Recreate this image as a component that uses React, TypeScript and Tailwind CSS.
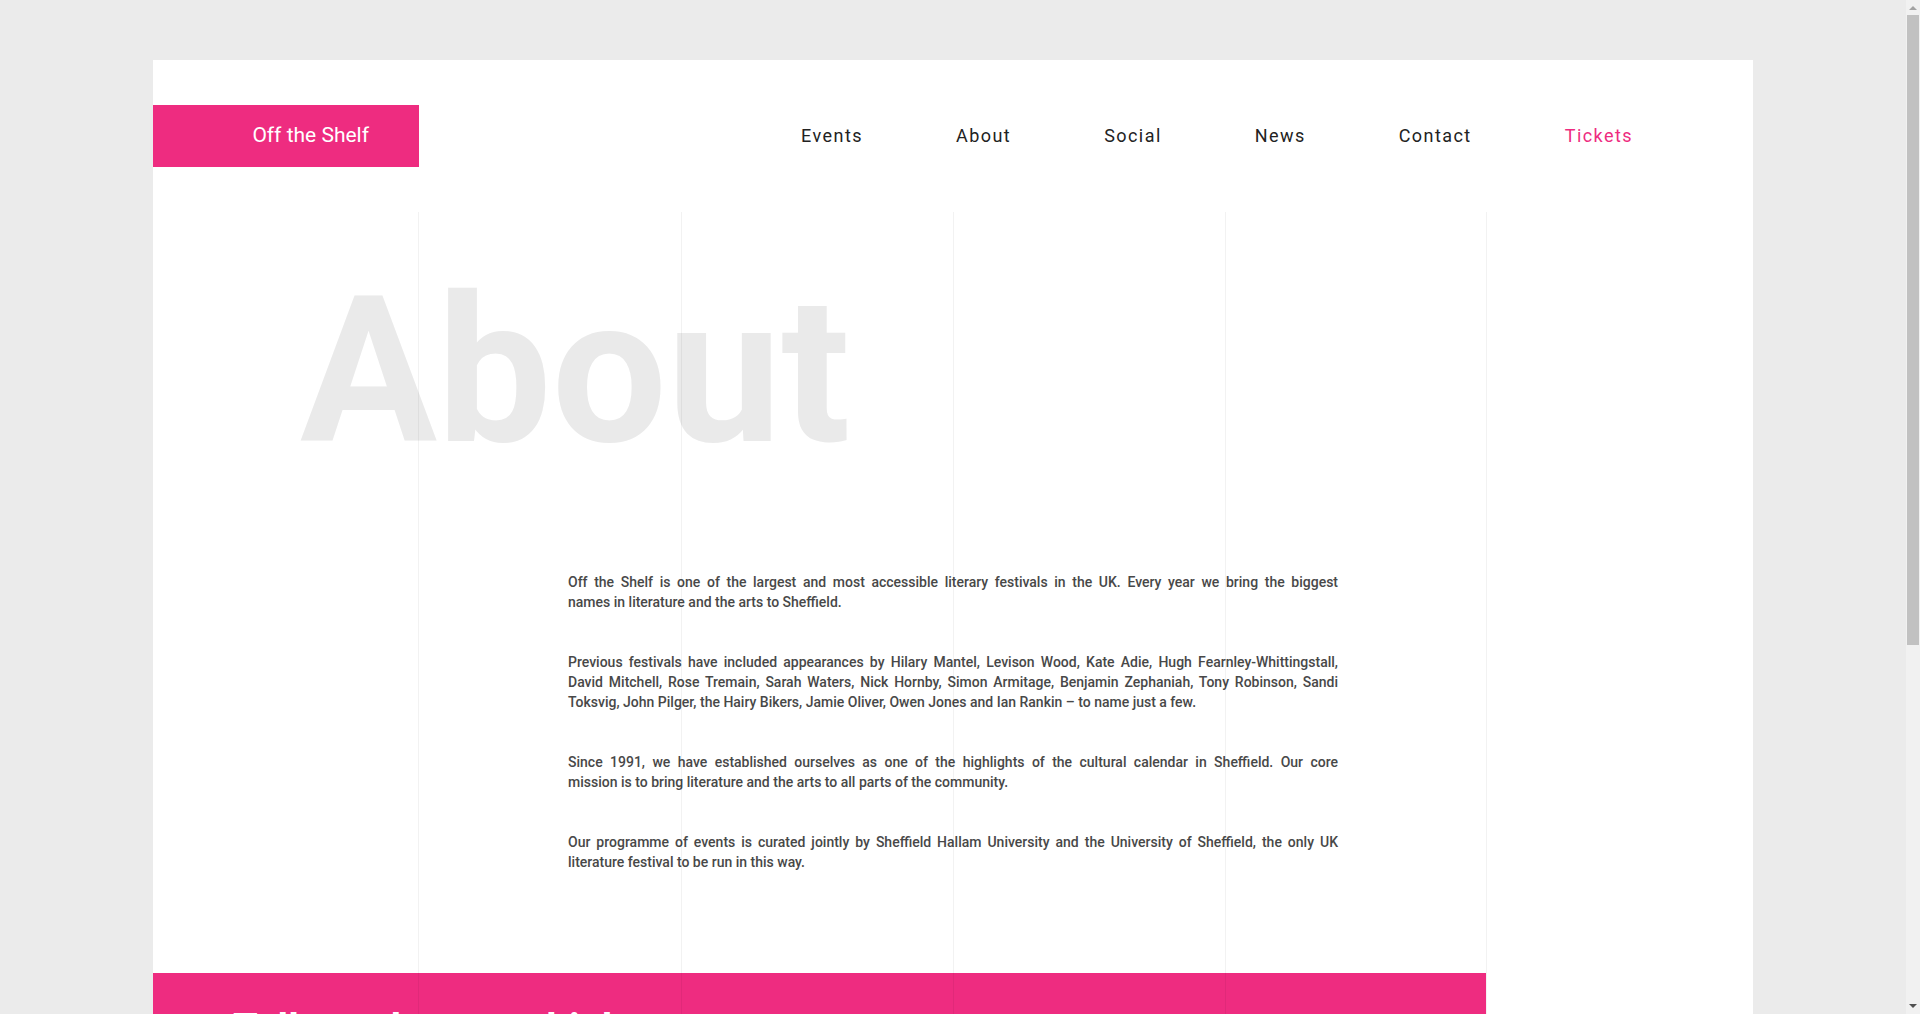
const navItems = ['Events', 'About', 'Social', 'News', 'Contact'];

const paragraphs = [
  'Off the Shelf is one of the largest and most accessible literary festivals in the UK. Every year we bring the biggest names\u00a0in\u00a0literature and the arts to Sheffield.',
  'Previous festivals have included appearances by Hilary Mantel, Levison Wood, Kate Adie, Hugh Fearnley-Whittingstall, David Mitchell, Rose Tremain, Sarah Waters, Nick Hornby, Simon Armitage, Benjamin Zephaniah, Tony Robinson, Sandi Toksvig, John Pilger, the Hairy Bikers, Jamie Oliver, Owen Jones and Ian Rankin – to name just a few.',
  'Since 1991, we have established ourselves as one of the highlights of the cultural calendar in Sheffield. Our core mission\u00a0is\u00a0to bring literature and the arts to all parts of the community.',
  'Our programme of events is curated jointly by Sheffield Hallam University and the University of Sheffield, the only UK literature festival to be run in this way.',
];

function Header() {
  return (
    <header className="flex items-center justify-between py-[45px] pr-[120px]">
      <a
        href="#home"
        className="flex h-[62px] w-[266px] shrink-0 items-center justify-end bg-[#ee2c80] pr-[50px] text-[21px] text-white"
      >
        Off the Shelf
      </a>
      <nav className="flex gap-[93px] text-lg tracking-[0.08em] text-[#222]">
        {navItems.map((item) => (
          <a key={item} href={`#${item.toLowerCase()}`}>
            {item}
          </a>
        ))}
        <a href="#tickets" className="text-[#ee2c80]">
          Tickets
        </a>
      </nav>
    </header>
  );
}

function GridLines() {
  return (
    <div
      aria-hidden="true"
      className="pointer-events-none absolute inset-0 grid grid-cols-[266fr_263fr_272fr_272fr_261fr_266fr]"
    >
      {[1, 2, 3, 4, 5].map((n) => (
        <div key={n} className="border-r border-black/5" />
      ))}
    </div>
  );
}

function Scrollbar() {
  return (
    <div aria-hidden="true" className="flex w-[14px] shrink-0 flex-col items-center bg-[#f1f1f1]">
      <svg viewBox="0 0 14 15" className="h-[15px] w-[14px] shrink-0">
        <path d="M3 10 L7 6 L11 10 Z" fill="#a3a3a3" />
      </svg>
      <div className="flex w-[12px] flex-1 flex-col">
        <div className="h-[64%] bg-[#c1c1c1]" />
      </div>
      <svg viewBox="0 0 14 15" className="h-[15px] w-[14px] shrink-0">
        <path d="M3 5 L11 5 L7 9 Z" fill="#505050" />
      </svg>
    </div>
  );
}

export default function App() {
  return (
    <div className="flex h-screen bg-[#ebebeb] font-['Roboto','Liberation_Sans',sans-serif]">
      <div className="min-w-0 flex-1 overflow-y-auto pt-[60px] [scrollbar-width:none]">
        <div className="mx-auto max-w-[1600px] bg-white">
          <Header />
          <main className="relative">
            <h1 className="pt-12 pl-[147px] text-[204px] leading-[224px] font-bold text-[#eaeaea]">
              About
            </h1>
            <div className="mx-auto flex max-w-[770px] flex-col gap-10 pt-[88px] pb-[101px] text-justify text-sm leading-5 font-medium text-[#484848]">
              {paragraphs.map((text) => (
                <p key={text}>{text}</p>
              ))}
            </div>
            <section className="w-5/6 bg-[#ee2c80] px-20 pt-8 pb-20 text-white">
              <h2 className="text-[40px] leading-[48px] font-bold">Tell us what you think</h2>
            </section>
            <GridLines />
          </main>
        </div>
      </div>
      <Scrollbar />
    </div>
  );
}
